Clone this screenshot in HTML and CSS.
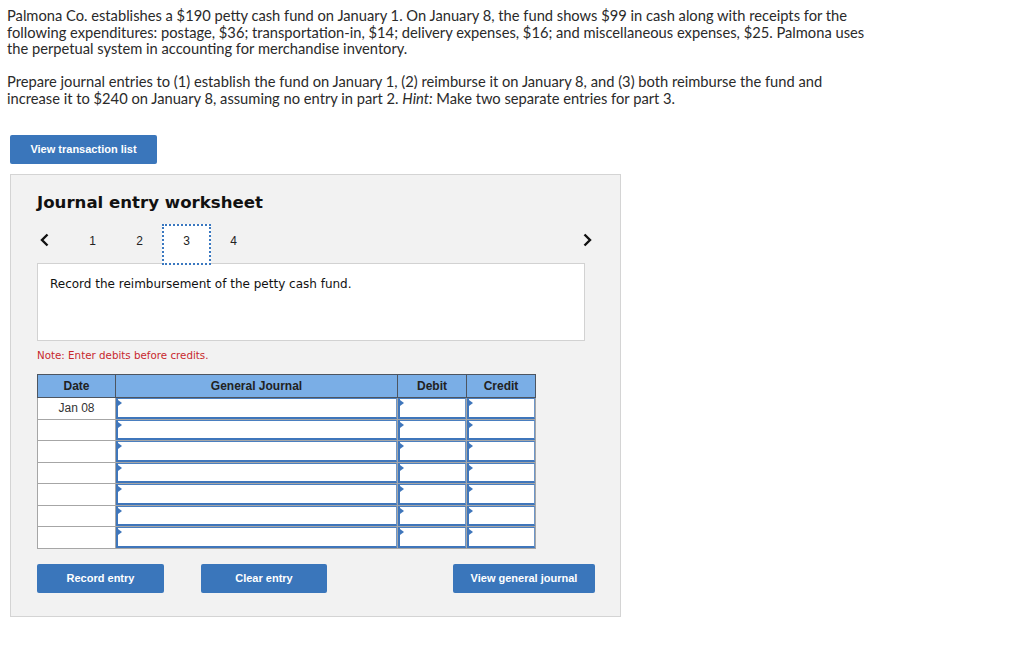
FILE: index.html
```html
<!DOCTYPE html>
<html>
<head>
<meta charset="utf-8">
<link rel="stylesheet" href="styles.css">
</head>
<body>
<div class="page">
  <p class="question">Palmona Co. establishes a $190 petty cash fund on January 1. On January 8, the fund shows $99 in cash along with receipts for the<br>following expenditures: postage, $36; transportation-in, $14; delivery expenses, $16; and miscellaneous expenses, $25. Palmona uses<br>the perpetual system in accounting for merchandise inventory.</p>
  <p class="question">Prepare journal entries to (1) establish the fund on January 1, (2) reimburse it on January 8, and (3) both reimburse the fund and<br>increase it to $240 on January 8, assuming no entry in part 2. <i>Hint:</i> Make two separate entries for part 3.</p>

  <button class="btn btn-top">View transaction list</button>

  <div class="panel">
    <h2 class="title">Journal entry worksheet</h2>
    <div class="nav">
      <span class="arrow"><svg width="9" height="14" viewBox="0 0 9 14"><path d="M7.5 1.5 L2 7 L7.5 12.5" fill="none" stroke="#111" stroke-width="2.4"/></svg></span>
      <span class="step first">1</span>
      <span class="step">2</span>
      <span class="step active">3</span>
      <span class="step">4</span>
      <span class="spacer"></span>
      <span class="arrow right"><svg width="9" height="14" viewBox="0 0 9 14"><path d="M1.5 1.5 L7 7 L1.5 12.5" fill="none" stroke="#111" stroke-width="2.4"/></svg></span>
    </div>
    <div class="desc">Record the reimbursement of the petty cash fund.</div>
    <div class="note">Note: Enter debits before credits.</div>

    <table class="journal">
      <thead>
        <tr><th class="c-date">Date</th><th class="c-gj">General Journal</th><th class="c-num">Debit</th><th class="c-num">Credit</th></tr>
      </thead>
      <tbody>
        <tr><td class="date">Jan 08</td><td class="in"><div class="box"></div></td><td class="in"><div class="box"></div></td><td class="in"><div class="box"></div></td></tr>
        <tr><td class="date"></td><td class="in"><div class="box"></div></td><td class="in"><div class="box"></div></td><td class="in"><div class="box"></div></td></tr>
        <tr><td class="date"></td><td class="in"><div class="box"></div></td><td class="in"><div class="box"></div></td><td class="in"><div class="box"></div></td></tr>
        <tr><td class="date"></td><td class="in"><div class="box"></div></td><td class="in"><div class="box"></div></td><td class="in"><div class="box"></div></td></tr>
        <tr><td class="date"></td><td class="in"><div class="box"></div></td><td class="in"><div class="box"></div></td><td class="in"><div class="box"></div></td></tr>
        <tr><td class="date"></td><td class="in"><div class="box"></div></td><td class="in"><div class="box"></div></td><td class="in"><div class="box"></div></td></tr>
        <tr><td class="date"></td><td class="in"><div class="box"></div></td><td class="in"><div class="box"></div></td><td class="in"><div class="box"></div></td></tr>
      </tbody>
    </table>

    <div class="actions">
      <button class="btn btn-record">Record entry</button>
      <button class="btn btn-clear">Clear entry</button>
      <button class="btn btn-view">View general journal</button>
    </div>
  </div>
</div>
</body>
</html>
```

FILE: styles.css
```css
html, body {
  margin: 0;
  padding: 0;
  background: #fff;
}
.page {
  padding: 7px 0 0 7px;
}
.question {
  margin: 0 0 16.5px 0;
  width: 960px;
  font-family: Lato, "Liberation Sans", sans-serif;
  font-size: 14.7px;
  line-height: 16.5px;
  color: #2a2a2a;
  white-space: nowrap;
}
.btn {
  display: block;
  border: none;
  border-radius: 2px;
  background: #3a76bb;
  color: #fff;
  font-family: "Liberation Sans", Arial, sans-serif;
  font-weight: bold;
  font-size: 11px;
  height: 29px;
  padding: 0;
  cursor: pointer;
}
.btn-top {
  margin: 29px 0 0 3px;
  width: 147px;
  padding-bottom: 2px;
}
.panel {
  margin: 10px 0 0 3px;
  width: 609px;
  box-sizing: content-box;
  border: 1px solid #d4d4d4;
  background: #f2f2f2;
  padding: 18px 0 23px 0;
}
.title {
  margin: 0 0 0 26px;
  font-family: "DejaVu Sans", Verdana, sans-serif;
  font-weight: bold;
  font-size: 16.6px;
  line-height: 20px;
  color: #111;
}
.nav {
  display: flex;
  align-items: flex-start;
  margin: 11px 0 0 26px;
  width: 552px;
  height: 41px;
}
.arrow {
  display: flex;
  align-items: center;
  justify-content: center;
  width: 15px;
  height: 14px;
  margin-top: 9px;
}
.step {
  width: 47px;
  height: 41px;
  display: flex;
  align-items: flex-start;
  justify-content: center;
  padding-top: 10px;
  font-family: "Liberation Sans", Arial, sans-serif;
  font-size: 12px;
  line-height: 14px;
  color: #222;
  box-sizing: border-box;
}
.step.first {
  margin-left: 17px;
}
.step.active {
  width: 49px;
  margin: 0 -1px;
  padding-top: 8px;
  background: #fff;
  border: 2px dotted #3a78c0;
  position: relative;
  z-index: 2;
}
.spacer {
  flex: 1;
}
.arrow.right {
  margin-right: -6px;
}
.desc {
  margin: -2px 0 0 26px;
  width: 522px;
  height: 64px;
  border: 1px solid #d2d2d2;
  background: #fff;
  padding: 12px 12px 0 12px;
  font-family: "DejaVu Sans", Verdana, sans-serif;
  font-size: 12px;
  line-height: 16px;
  color: #111;
  box-sizing: content-box;
}
.note {
  margin: 7px 0 0 26px;
  font-family: "DejaVu Sans", Verdana, sans-serif;
  font-size: 10.3px;
  line-height: 14px;
  color: #c8282d;
}
.journal {
  margin: 12px 0 0 26px;
  border-collapse: collapse;
  table-layout: fixed;
  width: 499px;
  font-family: "Liberation Sans", Arial, sans-serif;
  font-size: 12px;
}
.journal th {
  background: #7aaee6;
  color: #222;
  font-weight: bold;
  height: 22px;
  padding: 0;
  border: 1px solid #4d5560;
  font-size: 12px;
}
.c-date { width: 77px; }
.c-gj { width: 281px; }
.c-num { width: 68px; }
.journal td {
  height: 20.5px;
  padding: 0;
  border: 1px solid #a6a6a6;
  background: #fff;
}
.journal td.date {
  text-align: center;
  color: #333;
  vertical-align: top;
  padding-top: 3px;
  height: 17.5px;
  line-height: 14px;
}
.journal td.in {
  vertical-align: top;
}
.box {
  position: relative;
  height: 17.5px;
  border-top: 1px solid #4a7fc0;
  border-left: 2px solid #3f76bb;
  border-right: 1px solid #6d96c8;
  border-bottom: 2px solid #3f76bb;
  background: #fff;
}
.box::before {
  content: "";
  position: absolute;
  left: 0;
  top: 1px;
  border-top: 3px solid transparent;
  border-bottom: 3px solid transparent;
  border-left: 4px solid #3f76bb;
}
.actions {
  display: flex;
  margin: 15px 0 0 26px;
}
.btn-record {
  width: 127px;
}
.btn-clear {
  width: 126px;
  margin-left: 37px;
}
.btn-view {
  width: 142px;
  margin-left: 126px;
}
```
